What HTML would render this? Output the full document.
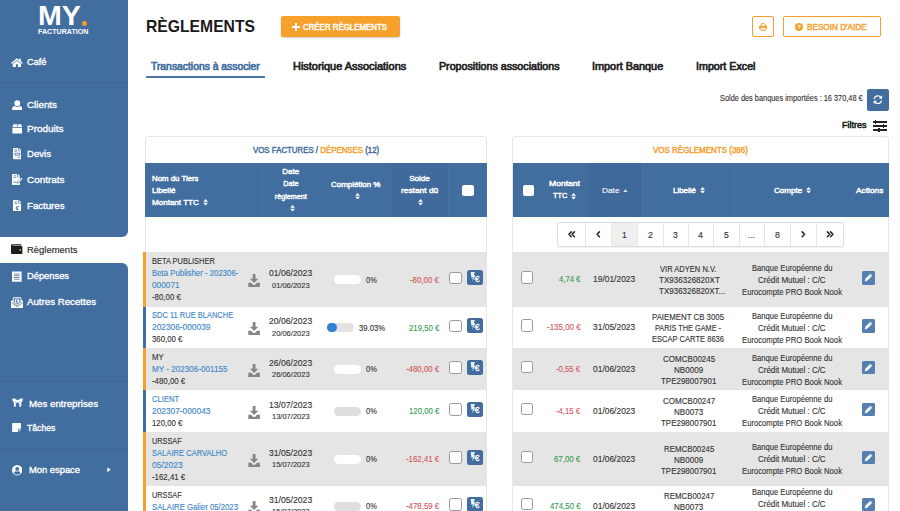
<!DOCTYPE html>
<html lang="fr">
<head>
<meta charset="utf-8">
<title>Règlements</title>
<style>
*{box-sizing:border-box;margin:0;padding:0}
html,body{width:900px;height:511px;overflow:hidden;background:#fff;font-family:"Liberation Sans",sans-serif;color:#333}
.a{position:absolute}
.t{position:absolute;white-space:nowrap;transform-origin:0 50%}
.b{font-weight:bold}
</style>
</head>
<body>
<div class="a" style="left:0px;top:0px;width:128px;height:237px;background:#416d9f;border-bottom-right-radius:6px"></div>
<div class="a" style="left:0px;top:263px;width:128px;height:248px;background:#416d9f;border-top-right-radius:6px"></div>
<div class="a" style="left:0px;top:81.5px;width:128px;height:1px;background:#3b6395;"></div>
<div class="a" style="left:0px;top:381px;width:128px;height:1px;background:#3b6395;"></div>
<div class="a" style="left:0px;top:449px;width:128px;height:1px;background:#3b6395;"></div>
<div class="a" style="left:81.5px;top:21px;width:5px;height:5px;background:#f5a02c;border-radius:50%"></div>
<div class="a" style="left:281px;top:16px;width:119px;height:21px;background:#f7a12d;border-radius:2px;box-shadow:0 1px 2px rgba(0,0,0,.2)"></div>
<div class="a" style="left:752px;top:16px;width:22px;height:21px;background:#fff;border:1px solid #f5a02c;border-radius:2px"></div>
<div class="a" style="left:783px;top:16px;width:98px;height:21px;background:#fff;border:1px solid #f5a02c;border-radius:2px"></div>
<div class="a" style="left:145.7px;top:76.2px;width:119.5px;height:1.6px;background:#4a73a6;"></div>
<div class="a" style="left:867px;top:88.5px;width:22px;height:22px;background:#416d9f;border-radius:2px"></div>
<div class="a" style="left:145.2px;top:136.3px;width:341.6px;height:380px;background:#fff;border:1px solid #e8e8e8;border-radius:3px"></div>
<div class="a" style="left:145.4px;top:163.2px;width:341.2px;height:53.6px;background:#416d9f;"></div>
<div class="a" style="left:462.3px;top:184.7px;width:11.6px;height:11.2px;background:#fff;border-radius:2px"></div>
<div class="a" style="left:390.3px;top:163.2px;width:58px;height:53.6px;background:rgba(0,0,0,.025);"></div>
<div class="a" style="left:261.5px;top:163.2px;width:1px;height:53.6px;background:rgba(255,255,255,.04);"></div>
<div class="a" style="left:322px;top:163.2px;width:1px;height:53.6px;background:rgba(255,255,255,.04);"></div>
<div class="a" style="left:390.3px;top:163.2px;width:1px;height:53.6px;background:rgba(255,255,255,.04);"></div>
<div class="a" style="left:448.3px;top:163.2px;width:1px;height:53.6px;background:rgba(255,255,255,.04);"></div>
<div class="a" style="left:146px;top:252px;width:340.5px;height:54.6px;background:#e5e5e5;"></div>
<div class="a" style="left:142.8px;top:252px;width:3.5px;height:54.6px;background:#f5a02c;"></div>
<div class="a" style="left:334px;top:274.8px;width:27.2px;height:9.6px;background:#fff;border-radius:5px"></div>
<div class="a" style="left:449.2px;top:271.5px;width:12.4px;height:12.6px;background:#fff;border:1px solid #9a9a9a;border-radius:2.5px"></div>
<div class="a" style="left:467.4px;top:270.2px;width:15.5px;height:15px;background:#416d9f;border-radius:2.5px"></div>
<div class="a" style="left:142.8px;top:306.6px;width:3.5px;height:41.4px;background:#416d9f;"></div>
<div class="a" style="left:326.8px;top:322.8px;width:27.2px;height:9.6px;background:#e3e3e3;border-radius:5px"></div>
<div class="a" style="left:326.8px;top:322.8px;width:10.5px;height:9.6px;background:#2f80d0;border-radius:5px"></div>
<div class="a" style="left:449.2px;top:319.5px;width:12.4px;height:12.6px;background:#fff;border:1px solid #9a9a9a;border-radius:2.5px"></div>
<div class="a" style="left:467.4px;top:318.2px;width:15.5px;height:15px;background:#416d9f;border-radius:2.5px"></div>
<div class="a" style="left:146px;top:348px;width:340.5px;height:42px;background:#e5e5e5;"></div>
<div class="a" style="left:142.8px;top:348px;width:3.5px;height:42px;background:#f5a02c;"></div>
<div class="a" style="left:334px;top:364.5px;width:27.2px;height:9.6px;background:#fff;border-radius:5px"></div>
<div class="a" style="left:449.2px;top:361.2px;width:12.4px;height:12.6px;background:#fff;border:1px solid #9a9a9a;border-radius:2.5px"></div>
<div class="a" style="left:467.4px;top:359.9px;width:15.5px;height:15px;background:#416d9f;border-radius:2.5px"></div>
<div class="a" style="left:142.8px;top:390px;width:3.5px;height:42px;background:#416d9f;"></div>
<div class="a" style="left:334px;top:406.5px;width:27.2px;height:9.6px;background:#dedede;border-radius:5px"></div>
<div class="a" style="left:449.2px;top:403.2px;width:12.4px;height:12.6px;background:#fff;border:1px solid #9a9a9a;border-radius:2.5px"></div>
<div class="a" style="left:467.4px;top:401.9px;width:15.5px;height:15px;background:#416d9f;border-radius:2.5px"></div>
<div class="a" style="left:146px;top:432px;width:340.5px;height:54px;background:#e5e5e5;"></div>
<div class="a" style="left:142.8px;top:432px;width:3.5px;height:54px;background:#f5a02c;"></div>
<div class="a" style="left:334px;top:454.5px;width:27.2px;height:9.6px;background:#fff;border-radius:5px"></div>
<div class="a" style="left:449.2px;top:451.2px;width:12.4px;height:12.6px;background:#fff;border:1px solid #9a9a9a;border-radius:2.5px"></div>
<div class="a" style="left:467.4px;top:449.9px;width:15.5px;height:15px;background:#416d9f;border-radius:2.5px"></div>
<div class="a" style="left:142.8px;top:486px;width:3.5px;height:40px;background:#f5a02c;"></div>
<div class="a" style="left:334px;top:501.5px;width:27.2px;height:9.6px;background:#dedede;border-radius:5px"></div>
<div class="a" style="left:449.2px;top:498.2px;width:12.4px;height:12.6px;background:#fff;border:1px solid #9a9a9a;border-radius:2.5px"></div>
<div class="a" style="left:467.4px;top:496.9px;width:15.5px;height:15px;background:#416d9f;border-radius:2.5px"></div>
<div class="a" style="left:512.4px;top:136.3px;width:376.6px;height:380px;background:#fff;border:1px solid #e8e8e8;border-radius:3px"></div>
<div class="a" style="left:512.6px;top:163.2px;width:376.2px;height:53.6px;background:#416d9f;"></div>
<div class="a" style="left:586.5px;top:163.2px;width:55.7px;height:53.6px;background:rgba(0,0,0,.03);"></div>
<div class="a" style="left:522.6px;top:184.5px;width:11.6px;height:11.4px;background:#fff;border-radius:2px"></div>
<div class="a" style="left:586.5px;top:163.2px;width:1px;height:53.6px;background:rgba(255,255,255,.04);"></div>
<div class="a" style="left:642.2px;top:163.2px;width:1px;height:53.6px;background:rgba(255,255,255,.04);"></div>
<div class="a" style="left:733.8px;top:163.2px;width:1px;height:53.6px;background:rgba(255,255,255,.04);"></div>
<div class="a" style="left:557.3px;top:222.3px;width:286.7px;height:25px;background:#fff;border:1px solid #dcdcdc;border-radius:2.5px;box-shadow:0 1px 1px rgba(0,0,0,.06)"></div>
<div class="a" style="left:610.5px;top:223.3px;width:26.5px;height:23px;background:#efefef;"></div>
<div class="a" style="left:585.4px;top:223.3px;width:1px;height:23px;background:#e6e6e6;"></div>
<div class="a" style="left:610.5px;top:223.3px;width:1px;height:23px;background:#e6e6e6;"></div>
<div class="a" style="left:637px;top:223.3px;width:1px;height:23px;background:#e6e6e6;"></div>
<div class="a" style="left:662.5px;top:223.3px;width:1px;height:23px;background:#e6e6e6;"></div>
<div class="a" style="left:687.8px;top:223.3px;width:1px;height:23px;background:#e6e6e6;"></div>
<div class="a" style="left:713.3px;top:223.3px;width:1px;height:23px;background:#e6e6e6;"></div>
<div class="a" style="left:739px;top:223.3px;width:1px;height:23px;background:#e6e6e6;"></div>
<div class="a" style="left:764.4px;top:223.3px;width:1px;height:23px;background:#e6e6e6;"></div>
<div class="a" style="left:790.4px;top:223.3px;width:1px;height:23px;background:#e6e6e6;"></div>
<div class="a" style="left:815.7px;top:223.3px;width:1px;height:23px;background:#e6e6e6;"></div>
<div class="a" style="left:513px;top:252px;width:375.5px;height:54.6px;background:#e5e5e5;"></div>
<div class="a" style="left:521px;top:271.0px;width:12.3px;height:12.5px;background:#fff;border:1px solid #9a9a9a;border-radius:2.5px"></div>
<div class="a" style="left:861.8px;top:271.0px;width:13.7px;height:13.5px;background:#547fb0;border-radius:1.5px"></div>
<div class="a" style="left:521px;top:319.0px;width:12.3px;height:12.5px;background:#fff;border:1px solid #9a9a9a;border-radius:2.5px"></div>
<div class="a" style="left:861.8px;top:319.0px;width:13.7px;height:13.5px;background:#547fb0;border-radius:1.5px"></div>
<div class="a" style="left:513px;top:348px;width:375.5px;height:42px;background:#e5e5e5;"></div>
<div class="a" style="left:521px;top:360.7px;width:12.3px;height:12.5px;background:#fff;border:1px solid #9a9a9a;border-radius:2.5px"></div>
<div class="a" style="left:861.8px;top:360.7px;width:13.7px;height:13.5px;background:#547fb0;border-radius:1.5px"></div>
<div class="a" style="left:521px;top:402.7px;width:12.3px;height:12.5px;background:#fff;border:1px solid #9a9a9a;border-radius:2.5px"></div>
<div class="a" style="left:861.8px;top:402.7px;width:13.7px;height:13.5px;background:#547fb0;border-radius:1.5px"></div>
<div class="a" style="left:513px;top:432px;width:375.5px;height:54px;background:#e5e5e5;"></div>
<div class="a" style="left:521px;top:450.7px;width:12.3px;height:12.5px;background:#fff;border:1px solid #9a9a9a;border-radius:2.5px"></div>
<div class="a" style="left:861.8px;top:450.7px;width:13.7px;height:13.5px;background:#547fb0;border-radius:1.5px"></div>
<div class="a" style="left:521px;top:497.7px;width:12.3px;height:12.5px;background:#fff;border:1px solid #9a9a9a;border-radius:2.5px"></div>
<div class="a" style="left:861.8px;top:497.7px;width:13.7px;height:13.5px;background:#547fb0;border-radius:1.5px"></div>
<div class="a" style="left:295px;top:23.2px;width:1.7px;height:7.6px;background:#fff;border-radius:.5px"></div>
<div class="a" style="left:292px;top:26.1px;width:7.6px;height:1.7px;background:#fff;border-radius:.5px"></div>
<div class="a" style="left:872.5px;top:121.35px;width:14.5px;height:1.3px;background:#222;"></div>
<div class="a" style="left:874.5px;top:120.4px;width:1.6px;height:3.2px;background:#222;"></div>
<div class="a" style="left:872.5px;top:125.35px;width:14.5px;height:1.3px;background:#222;"></div>
<div class="a" style="left:882.6999999999999px;top:124.4px;width:1.6px;height:3.2px;background:#222;"></div>
<div class="a" style="left:872.5px;top:129.35px;width:14.5px;height:1.3px;background:#222;"></div>
<div class="a" style="left:878.0999999999999px;top:128.4px;width:1.6px;height:3.2px;background:#222;"></div>
<div class="t" id="t0" style="left:37.8px;top:1.7px;font-size:27px;line-height:28px;color:#fff;letter-spacing:0px;transform:scaleX(1.0568);font-weight:bold;">MY</div>
<div class="t" id="t1" style="left:38.3px;top:27.4px;font-size:6.6px;line-height:9px;color:#fff;letter-spacing:0px;transform:scaleX(1.0799);font-weight:bold;">FACTURATION</div>
<div class="t" id="t2" style="left:27px;top:55.3px;font-size:9.8px;line-height:13px;color:#fff;letter-spacing:0px;transform:scaleX(0.9419);-webkit-text-stroke:0.34px #fff;">Café</div>
<div class="t" id="t3" style="left:26.5px;top:97.8px;font-size:9.8px;line-height:13px;color:#fff;letter-spacing:0px;transform:scaleX(1.0016);-webkit-text-stroke:0.34px #fff;">Clients</div>
<div class="t" id="t4" style="left:26.5px;top:122.3px;font-size:9.8px;line-height:13px;color:#fff;letter-spacing:0px;transform:scaleX(1.0152);-webkit-text-stroke:0.34px #fff;">Produits</div>
<div class="t" id="t5" style="left:26.5px;top:147.3px;font-size:9.8px;line-height:13px;color:#fff;letter-spacing:0px;transform:scaleX(0.9796);-webkit-text-stroke:0.34px #fff;">Devis</div>
<div class="t" id="t6" style="left:26.5px;top:173.3px;font-size:9.8px;line-height:13px;color:#fff;letter-spacing:0px;transform:scaleX(1.0127);-webkit-text-stroke:0.34px #fff;">Contrats</div>
<div class="t" id="t7" style="left:26.5px;top:199.3px;font-size:9.8px;line-height:13px;color:#fff;letter-spacing:0px;transform:scaleX(0.9836);-webkit-text-stroke:0.34px #fff;">Factures</div>
<div class="t" id="t8" style="left:26.5px;top:243.3px;font-size:9.8px;line-height:13px;color:#2a2a2a;letter-spacing:0px;transform:scaleX(0.9659);-webkit-text-stroke:0.15px #2a2a2a;">Règlements</div>
<div class="t" id="t9" style="left:26.5px;top:269.3px;font-size:9.8px;line-height:13px;color:#fff;letter-spacing:0px;transform:scaleX(0.9518);-webkit-text-stroke:0.34px #fff;">Dépenses</div>
<div class="t" id="t10" style="left:26.5px;top:295.3px;font-size:9.8px;line-height:13px;color:#fff;letter-spacing:0px;transform:scaleX(0.9899);-webkit-text-stroke:0.34px #fff;">Autres Recettes</div>
<div class="t" id="t11" style="left:28.5px;top:396.8px;font-size:9.8px;line-height:13px;color:#fff;letter-spacing:0px;transform:scaleX(0.9899);-webkit-text-stroke:0.34px #fff;">Mes entreprises</div>
<div class="t" id="t12" style="left:27px;top:421.3px;font-size:9.8px;line-height:13px;color:#fff;letter-spacing:0px;transform:scaleX(0.8805);-webkit-text-stroke:0.34px #fff;">Tâches</div>
<div class="t" id="t13" style="left:28.5px;top:463.3px;font-size:9.8px;line-height:13px;color:#fff;letter-spacing:0px;transform:scaleX(0.9555);-webkit-text-stroke:0.34px #fff;">Mon espace</div>
<div class="t" id="t14" style="left:146px;top:15.5px;font-size:17px;line-height:22px;color:#1a1a1a;letter-spacing:0px;transform:scaleX(0.9232);font-weight:bold;">RÈGLEMENTS</div>
<div class="t" id="t15" style="left:302.7px;top:21.6px;font-size:8.6px;line-height:10px;color:#fff;letter-spacing:0px;transform:scaleX(0.9162);-webkit-text-stroke:0.47px #fff;">CRÉER RÈGLEMENTS</div>
<div class="t" id="t16" style="left:807px;top:21.6px;font-size:8.6px;line-height:10px;color:#f5a02c;letter-spacing:0px;transform:scaleX(0.9509);-webkit-text-stroke:0.43px #f5a02c;">BESOIN D'AIDE</div>
<div class="t" id="t17" style="left:151px;top:59.9px;font-size:10.2px;line-height:14px;color:#416d9f;letter-spacing:0px;transform:scaleX(1.0149);-webkit-text-stroke:0.66px #416d9f;">Transactions à associer</div>
<div class="t" id="t18" style="left:292.5px;top:59.9px;font-size:10.2px;line-height:14px;color:#222;letter-spacing:0px;transform:scaleX(1.0747);-webkit-text-stroke:0.66px #222;">Historique Associations</div>
<div class="t" id="t19" style="left:438.5px;top:59.9px;font-size:10.2px;line-height:14px;color:#222;letter-spacing:0px;transform:scaleX(1.0483);-webkit-text-stroke:0.66px #222;">Propositions associations</div>
<div class="t" id="t20" style="left:591.5px;top:59.9px;font-size:10.2px;line-height:14px;color:#222;letter-spacing:0px;transform:scaleX(1.0654);-webkit-text-stroke:0.66px #222;">Import Banque</div>
<div class="t" id="t21" style="left:695.5px;top:59.9px;font-size:10.2px;line-height:14px;color:#222;letter-spacing:0px;transform:scaleX(1.0508);-webkit-text-stroke:0.66px #222;">Import Excel</div>
<div class="t" id="t22" style="left:720px;top:94.2px;font-size:8.2px;line-height:10px;color:#333;letter-spacing:0px;transform:scaleX(0.9008);-webkit-text-stroke:0.12px #333;">Solde des banques importées : 16 370,48 €</div>
<div class="t" id="t23" style="left:841.8px;top:120.1px;font-size:9px;line-height:11px;color:#222;letter-spacing:0px;transform:scaleX(0.9959);-webkit-text-stroke:0.54px #222;">Filtres</div>
<div class="t" id="t24" style="left:253px;top:145.4px;font-size:8.6px;line-height:10px;color:#416d9f;letter-spacing:0px;transform:scaleX(0.9143);-webkit-text-stroke:0.43px #416d9f;">VOS FACTURES / <span style="color:#f5a02c;-webkit-text-stroke-color:#f5a02c">DÉPENSES</span> (12)</div>
<div class="t" id="t25" style="left:152px;top:173.5px;font-size:8px;line-height:10px;color:#fff;letter-spacing:0px;transform:scaleX(0.9773);-webkit-text-stroke:0.44px #fff;">Nom du Tiers</div>
<div class="t" id="t26" style="left:152px;top:185.5px;font-size:8px;line-height:10px;color:#fff;letter-spacing:0px;transform:scaleX(1.0155);-webkit-text-stroke:0.44px #fff;">Libellé</div>
<div class="t" id="t27" style="left:152px;top:197.9px;font-size:8px;line-height:10px;color:#fff;letter-spacing:0px;transform:scaleX(1.0054);-webkit-text-stroke:0.44px #fff;">Montant TTC</div>
<div class="t" id="t28" style="left:282.35px;top:167.1px;font-size:8px;line-height:10px;color:#fff;letter-spacing:0px;transform:scaleX(1.0);-webkit-text-stroke:0.44px #fff;">Date</div>
<div class="t" id="t29" style="left:283.21px;top:179.1px;font-size:7.2px;line-height:10px;color:#fff;letter-spacing:0px;transform:scaleX(1.0);-webkit-text-stroke:0.4px #fff;">Date</div>
<div class="t" id="t30" style="left:274.82px;top:191.5px;font-size:7.2px;line-height:10px;color:#fff;letter-spacing:0px;transform:scaleX(1.0);-webkit-text-stroke:0.4px #fff;">règlement</div>
<div class="t" id="t31" style="left:331.2px;top:179.5px;font-size:8px;line-height:10px;color:#fff;letter-spacing:0px;transform:scaleX(0.9917);-webkit-text-stroke:0.44px #fff;">Complétion %</div>
<div class="t" id="t32" style="left:409.17px;top:173.5px;font-size:8px;line-height:10px;color:#fff;letter-spacing:0px;transform:scaleX(1.0);-webkit-text-stroke:0.44px #fff;">Solde</div>
<div class="t" id="t33" style="left:400.8px;top:185.5px;font-size:8px;line-height:10px;color:#fff;letter-spacing:0px;transform:scaleX(1.0456);-webkit-text-stroke:0.44px #fff;">restant dû</div>
<div class="t" id="t34" style="left:152.4px;top:255.7px;font-size:8.3px;line-height:11px;color:#333;letter-spacing:0px;transform:scaleX(0.8979);-webkit-text-stroke:0.12px #333;">BETA PUBLISHER</div>
<div class="t" id="t35" style="left:152.4px;top:267.9px;font-size:8.3px;line-height:11px;color:#3d85c6;letter-spacing:0px;transform:scaleX(0.9412);-webkit-text-stroke:0.12px #3d85c6;">Beta Publisher - 202306-</div>
<div class="t" id="t36" style="left:152.4px;top:280.1px;font-size:8.3px;line-height:11px;color:#3d85c6;letter-spacing:0px;transform:scaleX(0.9968);-webkit-text-stroke:0.12px #3d85c6;">000071</div>
<div class="t" id="t37" style="left:152.4px;top:292.3px;font-size:8.3px;line-height:11px;color:#333;letter-spacing:0px;transform:scaleX(0.9457);-webkit-text-stroke:0.12px #333;">-80,00 €</div>
<div class="t" id="t38" style="left:268.8px;top:268.0px;font-size:8.3px;line-height:11px;color:#333;letter-spacing:0px;transform:scaleX(1.0402);-webkit-text-stroke:0.12px #333;">01/06/2023</div>
<div class="t" id="t39" style="left:272px;top:280.6px;font-size:7px;line-height:10px;color:#333;letter-spacing:0px;transform:scaleX(1.0728);-webkit-text-stroke:0.1px #333;">01/06/2023</div>
<div class="t" id="t40" style="left:366px;top:274.7px;font-size:8.3px;line-height:11px;color:#333;letter-spacing:0px;transform:scaleX(0.9);-webkit-text-stroke:0.12px #333;">0%</div>
<div class="t" id="t41" style="left:410.4px;top:274.7px;font-size:8.3px;line-height:11px;color:#d2585a;letter-spacing:0px;transform:scaleX(0.9457);-webkit-text-stroke:0.12px #d2585a;">-80,00 €</div>
<div class="t" id="t42" style="left:152.4px;top:309.7px;font-size:8.3px;line-height:11px;color:#3d85c6;letter-spacing:0px;transform:scaleX(0.9046);-webkit-text-stroke:0.12px #3d85c6;">SDC 11 RUE BLANCHE</div>
<div class="t" id="t43" style="left:152.4px;top:321.9px;font-size:8.3px;line-height:11px;color:#3d85c6;letter-spacing:0px;transform:scaleX(1.0045);-webkit-text-stroke:0.12px #3d85c6;">202306-000039</div>
<div class="t" id="t44" style="left:152.4px;top:334.1px;font-size:8.3px;line-height:11px;color:#333;letter-spacing:0px;transform:scaleX(0.9413);-webkit-text-stroke:0.12px #333;">360,00 €</div>
<div class="t" id="t45" style="left:268.8px;top:316.0px;font-size:8.3px;line-height:11px;color:#333;letter-spacing:0px;transform:scaleX(1.0402);-webkit-text-stroke:0.12px #333;">20/06/2023</div>
<div class="t" id="t46" style="left:272px;top:328.6px;font-size:7px;line-height:10px;color:#333;letter-spacing:0px;transform:scaleX(1.0728);-webkit-text-stroke:0.1px #333;">20/06/2023</div>
<div class="t" id="t47" style="left:358.8px;top:322.7px;font-size:8.3px;line-height:11px;color:#333;letter-spacing:0px;transform:scaleX(0.9239);-webkit-text-stroke:0.12px #333;">39.03%</div>
<div class="t" id="t48" style="left:408.8px;top:322.7px;font-size:8.3px;line-height:11px;color:#3a9a52;letter-spacing:0px;transform:scaleX(0.9413);-webkit-text-stroke:0.12px #3a9a52;">219,50 €</div>
<div class="t" id="t49" style="left:152.4px;top:351.7px;font-size:8.3px;line-height:11px;color:#333;letter-spacing:0px;transform:scaleX(0.9315);-webkit-text-stroke:0.12px #333;">MY</div>
<div class="t" id="t50" style="left:152.4px;top:363.9px;font-size:8.3px;line-height:11px;color:#3d85c6;letter-spacing:0px;transform:scaleX(0.9794);-webkit-text-stroke:0.12px #3d85c6;">MY - 202306-001155</div>
<div class="t" id="t51" style="left:152.4px;top:376.1px;font-size:8.3px;line-height:11px;color:#333;letter-spacing:0px;transform:scaleX(0.9469);-webkit-text-stroke:0.12px #333;">-480,00 €</div>
<div class="t" id="t52" style="left:268.8px;top:357.7px;font-size:8.3px;line-height:11px;color:#333;letter-spacing:0px;transform:scaleX(1.0402);-webkit-text-stroke:0.12px #333;">26/06/2023</div>
<div class="t" id="t53" style="left:272px;top:370.3px;font-size:7px;line-height:10px;color:#333;letter-spacing:0px;transform:scaleX(1.0728);-webkit-text-stroke:0.1px #333;">26/06/2023</div>
<div class="t" id="t54" style="left:366px;top:364.4px;font-size:8.3px;line-height:11px;color:#333;letter-spacing:0px;transform:scaleX(0.9);-webkit-text-stroke:0.12px #333;">0%</div>
<div class="t" id="t55" style="left:406px;top:364.4px;font-size:8.3px;line-height:11px;color:#d2585a;letter-spacing:0px;transform:scaleX(0.9469);-webkit-text-stroke:0.12px #d2585a;">-480,00 €</div>
<div class="t" id="t56" style="left:152.4px;top:393.7px;font-size:8.3px;line-height:11px;color:#3d85c6;letter-spacing:0px;transform:scaleX(0.9215);-webkit-text-stroke:0.12px #3d85c6;">CLIENT</div>
<div class="t" id="t57" style="left:152.4px;top:405.9px;font-size:8.3px;line-height:11px;color:#3d85c6;letter-spacing:0px;transform:scaleX(1.0045);-webkit-text-stroke:0.12px #3d85c6;">202307-000043</div>
<div class="t" id="t58" style="left:152.4px;top:418.1px;font-size:8.3px;line-height:11px;color:#333;letter-spacing:0px;transform:scaleX(0.9413);-webkit-text-stroke:0.12px #333;">120,00 €</div>
<div class="t" id="t59" style="left:268.8px;top:399.7px;font-size:8.3px;line-height:11px;color:#333;letter-spacing:0px;transform:scaleX(1.0402);-webkit-text-stroke:0.12px #333;">13/07/2023</div>
<div class="t" id="t60" style="left:272px;top:412.3px;font-size:7px;line-height:10px;color:#333;letter-spacing:0px;transform:scaleX(1.0728);-webkit-text-stroke:0.1px #333;">13/07/2023</div>
<div class="t" id="t61" style="left:366px;top:406.4px;font-size:8.3px;line-height:11px;color:#333;letter-spacing:0px;transform:scaleX(0.9);-webkit-text-stroke:0.12px #333;">0%</div>
<div class="t" id="t62" style="left:408.8px;top:406.4px;font-size:8.3px;line-height:11px;color:#3a9a52;letter-spacing:0px;transform:scaleX(0.9413);-webkit-text-stroke:0.12px #3a9a52;">120,00 €</div>
<div class="t" id="t63" style="left:152.4px;top:435.7px;font-size:8.3px;line-height:11px;color:#333;letter-spacing:0px;transform:scaleX(0.8795);-webkit-text-stroke:0.12px #333;">URSSAF</div>
<div class="t" id="t64" style="left:152.4px;top:447.9px;font-size:8.3px;line-height:11px;color:#3d85c6;letter-spacing:0px;transform:scaleX(0.9145);-webkit-text-stroke:0.12px #3d85c6;">SALAIRE CARVALHO</div>
<div class="t" id="t65" style="left:152.4px;top:460.1px;font-size:8.3px;line-height:11px;color:#3d85c6;letter-spacing:0px;transform:scaleX(1.0267);-webkit-text-stroke:0.12px #3d85c6;">05/2023</div>
<div class="t" id="t66" style="left:152.4px;top:472.3px;font-size:8.3px;line-height:11px;color:#333;letter-spacing:0px;transform:scaleX(0.9469);-webkit-text-stroke:0.12px #333;">-162,41 €</div>
<div class="t" id="t67" style="left:268.8px;top:447.7px;font-size:8.3px;line-height:11px;color:#333;letter-spacing:0px;transform:scaleX(1.0402);-webkit-text-stroke:0.12px #333;">31/05/2023</div>
<div class="t" id="t68" style="left:272px;top:460.3px;font-size:7px;line-height:10px;color:#333;letter-spacing:0px;transform:scaleX(1.0728);-webkit-text-stroke:0.1px #333;">15/07/2023</div>
<div class="t" id="t69" style="left:366px;top:454.4px;font-size:8.3px;line-height:11px;color:#333;letter-spacing:0px;transform:scaleX(0.9);-webkit-text-stroke:0.12px #333;">0%</div>
<div class="t" id="t70" style="left:406px;top:454.4px;font-size:8.3px;line-height:11px;color:#d2585a;letter-spacing:0px;transform:scaleX(0.9469);-webkit-text-stroke:0.12px #d2585a;">-162,41 €</div>
<div class="t" id="t71" style="left:152.4px;top:489.7px;font-size:8.3px;line-height:11px;color:#333;letter-spacing:0px;transform:scaleX(0.8795);-webkit-text-stroke:0.12px #333;">URSSAF</div>
<div class="t" id="t72" style="left:152.4px;top:501.9px;font-size:8.3px;line-height:11px;color:#3d85c6;letter-spacing:0px;transform:scaleX(0.937);-webkit-text-stroke:0.12px #3d85c6;">SALAIRE Galier 05/2023</div>
<div class="t" id="t73" style="left:152.4px;top:514.1px;font-size:8.3px;line-height:11px;color:#333;letter-spacing:0px;transform:scaleX(0.9469);-webkit-text-stroke:0.12px #333;">-478,59 €</div>
<div class="t" id="t74" style="left:268.8px;top:494.7px;font-size:8.3px;line-height:11px;color:#333;letter-spacing:0px;transform:scaleX(1.0402);-webkit-text-stroke:0.12px #333;">31/05/2023</div>
<div class="t" id="t75" style="left:272px;top:507.3px;font-size:7px;line-height:10px;color:#333;letter-spacing:0px;transform:scaleX(1.0728);-webkit-text-stroke:0.1px #333;">15/07/2023</div>
<div class="t" id="t76" style="left:366px;top:501.4px;font-size:8.3px;line-height:11px;color:#333;letter-spacing:0px;transform:scaleX(0.9);-webkit-text-stroke:0.12px #333;">0%</div>
<div class="t" id="t77" style="left:406px;top:501.4px;font-size:8.3px;line-height:11px;color:#d2585a;letter-spacing:0px;transform:scaleX(0.9469);-webkit-text-stroke:0.12px #d2585a;">-478,59 €</div>
<div class="t" id="t78" style="left:653.3px;top:145.4px;font-size:8.6px;line-height:10px;color:#f5a02c;letter-spacing:0px;transform:scaleX(0.9285);-webkit-text-stroke:0.43px #f5a02c;">VOS RÈGLEMENTS (386)</div>
<div class="t" id="t79" style="left:549px;top:178.9px;font-size:8px;line-height:10px;color:#fff;letter-spacing:0px;transform:scaleX(1.0724);-webkit-text-stroke:0.44px #fff;">Montant</div>
<div class="t" id="t80" style="left:552.6px;top:191.3px;font-size:8px;line-height:10px;color:#fff;letter-spacing:0px;transform:scaleX(0.9253);-webkit-text-stroke:0.44px #fff;">TTC</div>
<div class="t" id="t81" style="left:601.5px;top:185.5px;font-size:8px;line-height:10px;color:#fff;letter-spacing:0px;transform:scaleX(1.0351);-webkit-text-stroke:0.12px #fff;">Date</div>
<div class="t" id="t82" style="left:672.6px;top:185.5px;font-size:8px;line-height:10px;color:#fff;letter-spacing:0px;transform:scaleX(0.9939);-webkit-text-stroke:0.44px #fff;">Libellé</div>
<div class="t" id="t83" style="left:773.5px;top:185.5px;font-size:8px;line-height:10px;color:#fff;letter-spacing:0px;transform:scaleX(1.0102);-webkit-text-stroke:0.44px #fff;">Compte</div>
<div class="t" id="t84" style="left:855.6px;top:185.5px;font-size:8px;line-height:10px;color:#fff;letter-spacing:0px;transform:scaleX(1.0444);-webkit-text-stroke:0.44px #fff;">Actions</div>
<div class="t" id="t85" style="left:621.65px;top:229.5px;font-size:8.8px;line-height:11px;color:#333;letter-spacing:0px;transform:scaleX(0.98);-webkit-text-stroke:0.13px #333;">1</div>
<div class="t" id="t86" style="left:647.65px;top:229.5px;font-size:8.8px;line-height:11px;color:#333;letter-spacing:0px;transform:scaleX(0.98);-webkit-text-stroke:0.13px #333;">2</div>
<div class="t" id="t87" style="left:673.05px;top:229.5px;font-size:8.8px;line-height:11px;color:#333;letter-spacing:0px;transform:scaleX(0.98);-webkit-text-stroke:0.13px #333;">3</div>
<div class="t" id="t88" style="left:698.45px;top:229.5px;font-size:8.8px;line-height:11px;color:#333;letter-spacing:0px;transform:scaleX(0.98);-webkit-text-stroke:0.13px #333;">4</div>
<div class="t" id="t89" style="left:724.05px;top:229.5px;font-size:8.8px;line-height:11px;color:#333;letter-spacing:0px;transform:scaleX(0.98);-webkit-text-stroke:0.13px #333;">5</div>
<div class="t" id="t90" style="left:748.4px;top:229.5px;font-size:8.8px;line-height:11px;color:#333;letter-spacing:0px;transform:scaleX(0.98);-webkit-text-stroke:0.13px #333;">...</div>
<div class="t" id="t91" style="left:775.3px;top:229.5px;font-size:8.8px;line-height:11px;color:#333;letter-spacing:0px;transform:scaleX(0.98);-webkit-text-stroke:0.13px #333;">8</div>
<div class="t" id="t92" style="left:559px;top:274.4px;font-size:8.3px;line-height:11px;color:#3a9a52;letter-spacing:0px;transform:scaleX(0.9273);-webkit-text-stroke:0.12px #3a9a52;">4,74 €</div>
<div class="t" id="t93" style="left:593.3px;top:274.4px;font-size:8.3px;line-height:11px;color:#333;letter-spacing:0px;transform:scaleX(1.0161);-webkit-text-stroke:0.12px #333;">19/01/2023</div>
<div class="t" id="t94" style="left:660px;top:264.2px;font-size:8.3px;line-height:11px;color:#333;letter-spacing:0px;transform:scaleX(0.9104);-webkit-text-stroke:0.12px #333;">VIR ADYEN N.V.</div>
<div class="t" id="t95" style="left:658.7px;top:275.3px;font-size:8.3px;line-height:11px;color:#333;letter-spacing:0px;transform:scaleX(0.9692);-webkit-text-stroke:0.12px #333;">TX936326820XT</div>
<div class="t" id="t96" style="left:658.7px;top:286.4px;font-size:8.3px;line-height:11px;color:#333;letter-spacing:0px;transform:scaleX(0.9646);-webkit-text-stroke:0.12px #333;">TX936326820XT...</div>
<div class="t" id="t97" style="left:752px;top:262.7px;font-size:8.3px;line-height:11px;color:#333;letter-spacing:0px;transform:scaleX(0.9172);-webkit-text-stroke:0.12px #333;">Banque Européenne du</div>
<div class="t" id="t98" style="left:758.2px;top:274.7px;font-size:8.3px;line-height:11px;color:#333;letter-spacing:0px;transform:scaleX(0.9582);-webkit-text-stroke:0.12px #333;">Crédit Mutuel : C/C</div>
<div class="t" id="t99" style="left:742.2px;top:286.7px;font-size:8.3px;line-height:11px;color:#333;letter-spacing:0px;transform:scaleX(0.9266);-webkit-text-stroke:0.12px #333;">Eurocompte PRO Book Nook</div>
<div class="t" id="t100" style="left:546.7px;top:322.4px;font-size:8.3px;line-height:11px;color:#d2585a;letter-spacing:0px;transform:scaleX(0.9611);-webkit-text-stroke:0.12px #d2585a;">-135,00 €</div>
<div class="t" id="t101" style="left:593.3px;top:322.4px;font-size:8.3px;line-height:11px;color:#333;letter-spacing:0px;transform:scaleX(1.0161);-webkit-text-stroke:0.12px #333;">31/05/2023</div>
<div class="t" id="t102" style="left:652.4px;top:311.8px;font-size:8.3px;line-height:11px;color:#333;letter-spacing:0px;transform:scaleX(0.9443);-webkit-text-stroke:0.12px #333;">PAIEMENT CB 3005</div>
<div class="t" id="t103" style="left:655px;top:322.9px;font-size:8.3px;line-height:11px;color:#333;letter-spacing:0px;transform:scaleX(0.8818);-webkit-text-stroke:0.12px #333;">PARIS THE GAME -</div>
<div class="t" id="t104" style="left:652.4px;top:334.0px;font-size:8.3px;line-height:11px;color:#333;letter-spacing:0px;transform:scaleX(0.9112);-webkit-text-stroke:0.12px #333;">ESCAP CARTE 8636</div>
<div class="t" id="t105" style="left:752px;top:310.7px;font-size:8.3px;line-height:11px;color:#333;letter-spacing:0px;transform:scaleX(0.9172);-webkit-text-stroke:0.12px #333;">Banque Européenne du</div>
<div class="t" id="t106" style="left:758.2px;top:322.7px;font-size:8.3px;line-height:11px;color:#333;letter-spacing:0px;transform:scaleX(0.9582);-webkit-text-stroke:0.12px #333;">Crédit Mutuel : C/C</div>
<div class="t" id="t107" style="left:742.2px;top:334.7px;font-size:8.3px;line-height:11px;color:#333;letter-spacing:0px;transform:scaleX(0.9266);-webkit-text-stroke:0.12px #333;">Eurocompte PRO Book Nook</div>
<div class="t" id="t108" style="left:556.4px;top:364.1px;font-size:8.3px;line-height:11px;color:#d2585a;letter-spacing:0px;transform:scaleX(0.9287);-webkit-text-stroke:0.12px #d2585a;">-0,55 €</div>
<div class="t" id="t109" style="left:593.3px;top:364.1px;font-size:8.3px;line-height:11px;color:#333;letter-spacing:0px;transform:scaleX(1.0161);-webkit-text-stroke:0.12px #333;">01/06/2023</div>
<div class="t" id="t110" style="left:662.7px;top:354.2px;font-size:8.3px;line-height:11px;color:#333;letter-spacing:0px;transform:scaleX(0.9691);-webkit-text-stroke:0.12px #333;">COMCB00245</div>
<div class="t" id="t111" style="left:673.8px;top:365.3px;font-size:8.3px;line-height:11px;color:#333;letter-spacing:0px;transform:scaleX(0.9738);-webkit-text-stroke:0.12px #333;">NB0009</div>
<div class="t" id="t112" style="left:661px;top:376.4px;font-size:8.3px;line-height:11px;color:#333;letter-spacing:0px;transform:scaleX(0.9606);-webkit-text-stroke:0.12px #333;">TPE298007901</div>
<div class="t" id="t113" style="left:752px;top:352.7px;font-size:8.3px;line-height:11px;color:#333;letter-spacing:0px;transform:scaleX(0.9172);-webkit-text-stroke:0.12px #333;">Banque Européenne du</div>
<div class="t" id="t114" style="left:758.2px;top:364.7px;font-size:8.3px;line-height:11px;color:#333;letter-spacing:0px;transform:scaleX(0.9582);-webkit-text-stroke:0.12px #333;">Crédit Mutuel : C/C</div>
<div class="t" id="t115" style="left:742.2px;top:376.7px;font-size:8.3px;line-height:11px;color:#333;letter-spacing:0px;transform:scaleX(0.9266);-webkit-text-stroke:0.12px #333;">Eurocompte PRO Book Nook</div>
<div class="t" id="t116" style="left:556.4px;top:406.1px;font-size:8.3px;line-height:11px;color:#d2585a;letter-spacing:0px;transform:scaleX(0.9287);-webkit-text-stroke:0.12px #d2585a;">-4,15 €</div>
<div class="t" id="t117" style="left:593.3px;top:406.1px;font-size:8.3px;line-height:11px;color:#333;letter-spacing:0px;transform:scaleX(1.0161);-webkit-text-stroke:0.12px #333;">01/06/2023</div>
<div class="t" id="t118" style="left:662.7px;top:396.2px;font-size:8.3px;line-height:11px;color:#333;letter-spacing:0px;transform:scaleX(0.9691);-webkit-text-stroke:0.12px #333;">COMCB00247</div>
<div class="t" id="t119" style="left:673.8px;top:407.3px;font-size:8.3px;line-height:11px;color:#333;letter-spacing:0px;transform:scaleX(0.9738);-webkit-text-stroke:0.12px #333;">NB0073</div>
<div class="t" id="t120" style="left:661px;top:418.4px;font-size:8.3px;line-height:11px;color:#333;letter-spacing:0px;transform:scaleX(0.9606);-webkit-text-stroke:0.12px #333;">TPE298007901</div>
<div class="t" id="t121" style="left:752px;top:393.9px;font-size:8.3px;line-height:11px;color:#333;letter-spacing:0px;transform:scaleX(0.9172);-webkit-text-stroke:0.12px #333;">Banque Européenne du</div>
<div class="t" id="t122" style="left:758.2px;top:405.9px;font-size:8.3px;line-height:11px;color:#333;letter-spacing:0px;transform:scaleX(0.9582);-webkit-text-stroke:0.12px #333;">Crédit Mutuel : C/C</div>
<div class="t" id="t123" style="left:742.2px;top:417.9px;font-size:8.3px;line-height:11px;color:#333;letter-spacing:0px;transform:scaleX(0.9266);-webkit-text-stroke:0.12px #333;">Eurocompte PRO Book Nook</div>
<div class="t" id="t124" style="left:554.2px;top:454.1px;font-size:8.3px;line-height:11px;color:#3a9a52;letter-spacing:0px;transform:scaleX(0.9463);-webkit-text-stroke:0.12px #3a9a52;">67,00 €</div>
<div class="t" id="t125" style="left:593.3px;top:454.1px;font-size:8.3px;line-height:11px;color:#333;letter-spacing:0px;transform:scaleX(1.0161);-webkit-text-stroke:0.12px #333;">01/06/2023</div>
<div class="t" id="t126" style="left:663.5px;top:443.5px;font-size:8.3px;line-height:11px;color:#333;letter-spacing:0px;transform:scaleX(0.9482);-webkit-text-stroke:0.12px #333;">REMCB00245</div>
<div class="t" id="t127" style="left:673.8px;top:454.6px;font-size:8.3px;line-height:11px;color:#333;letter-spacing:0px;transform:scaleX(0.9738);-webkit-text-stroke:0.12px #333;">NB0009</div>
<div class="t" id="t128" style="left:661px;top:465.7px;font-size:8.3px;line-height:11px;color:#333;letter-spacing:0px;transform:scaleX(0.9606);-webkit-text-stroke:0.12px #333;">TPE298007901</div>
<div class="t" id="t129" style="left:752px;top:441.8px;font-size:8.3px;line-height:11px;color:#333;letter-spacing:0px;transform:scaleX(0.9172);-webkit-text-stroke:0.12px #333;">Banque Européenne du</div>
<div class="t" id="t130" style="left:758.2px;top:453.8px;font-size:8.3px;line-height:11px;color:#333;letter-spacing:0px;transform:scaleX(0.9582);-webkit-text-stroke:0.12px #333;">Crédit Mutuel : C/C</div>
<div class="t" id="t131" style="left:742.2px;top:465.8px;font-size:8.3px;line-height:11px;color:#333;letter-spacing:0px;transform:scaleX(0.9266);-webkit-text-stroke:0.12px #333;">Eurocompte PRO Book Nook</div>
<div class="t" id="t132" style="left:549.8px;top:501.1px;font-size:8.3px;line-height:11px;color:#3a9a52;letter-spacing:0px;transform:scaleX(0.9475);-webkit-text-stroke:0.12px #3a9a52;">474,50 €</div>
<div class="t" id="t133" style="left:593.3px;top:501.1px;font-size:8.3px;line-height:11px;color:#333;letter-spacing:0px;transform:scaleX(1.0161);-webkit-text-stroke:0.12px #333;">01/06/2023</div>
<div class="t" id="t134" style="left:663.5px;top:490.7px;font-size:8.3px;line-height:11px;color:#333;letter-spacing:0px;transform:scaleX(0.9482);-webkit-text-stroke:0.12px #333;">REMCB00247</div>
<div class="t" id="t135" style="left:673.8px;top:501.8px;font-size:8.3px;line-height:11px;color:#333;letter-spacing:0px;transform:scaleX(0.9738);-webkit-text-stroke:0.12px #333;">NB0073</div>
<div class="t" id="t136" style="left:661px;top:512.9px;font-size:8.3px;line-height:11px;color:#333;letter-spacing:0px;transform:scaleX(0.9606);-webkit-text-stroke:0.12px #333;">TPE298007901</div>
<div class="t" id="t137" style="left:752px;top:487.0px;font-size:8.3px;line-height:11px;color:#333;letter-spacing:0px;transform:scaleX(0.9172);-webkit-text-stroke:0.12px #333;">Banque Européenne du</div>
<div class="t" id="t138" style="left:758.2px;top:499.0px;font-size:8.3px;line-height:11px;color:#333;letter-spacing:0px;transform:scaleX(0.9582);-webkit-text-stroke:0.12px #333;">Crédit Mutuel : C/C</div>
<div class="t" id="t139" style="left:742.2px;top:511.0px;font-size:8.3px;line-height:11px;color:#333;letter-spacing:0px;transform:scaleX(0.9266);-webkit-text-stroke:0.12px #333;">Eurocompte PRO Book Nook</div>
<div class="t" id="t140" style="left:474.83px;top:273.6px;font-size:8.5px;line-height:10px;color:#fff;letter-spacing:0px;transform:scaleX(1);-webkit-text-stroke:0.3px #fff;">€</div>
<div class="t" id="t141" style="left:474.83px;top:321.6px;font-size:8.5px;line-height:10px;color:#fff;letter-spacing:0px;transform:scaleX(1);-webkit-text-stroke:0.3px #fff;">€</div>
<div class="t" id="t142" style="left:474.83px;top:363.3px;font-size:8.5px;line-height:10px;color:#fff;letter-spacing:0px;transform:scaleX(1);-webkit-text-stroke:0.3px #fff;">€</div>
<div class="t" id="t143" style="left:474.83px;top:405.3px;font-size:8.5px;line-height:10px;color:#fff;letter-spacing:0px;transform:scaleX(1);-webkit-text-stroke:0.3px #fff;">€</div>
<div class="t" id="t144" style="left:474.83px;top:453.3px;font-size:8.5px;line-height:10px;color:#fff;letter-spacing:0px;transform:scaleX(1);-webkit-text-stroke:0.3px #fff;">€</div>
<div class="t" id="t145" style="left:474.83px;top:500.3px;font-size:8.5px;line-height:10px;color:#fff;letter-spacing:0px;transform:scaleX(1);-webkit-text-stroke:0.3px #fff;">€</div>
<svg class="a" style="left:11.2px;top:57.5px;" width="11.8" height="9" viewBox="0 0 24 18"><path fill="#fff" d="M12 0.2 L0.2 10 L1.9 12 L12 3.7 L22.1 12 L23.8 10 L19.8 6.7 V1.4 H16.4 V3.9 Z"/><path fill="#fff" d="M12 5.4 L3.6 12.3 V18 H9.9 V12.8 H14.1 V18 H20.4 V12.3 Z"/></svg>
<svg class="a" style="left:11.8px;top:99.6px;" width="10.6" height="10.5" viewBox="0 0 22 21"><circle cx="11" cy="6.2" r="6" fill="#fff"/><path fill="#fff" d="M5.4 11.8 C2.2 12.2 0.2 14.6 0.2 17.6 V19 A2 2 0 0 0 2.2 21 H19.8 A2 2 0 0 0 21.8 19 V17.6 C21.8 14.6 19.8 12.2 16.6 11.8 C15 13 13 13.6 11 13.6 C9 13.6 7 13 5.4 11.8 Z"/></svg>
<svg class="a" style="left:11.5px;top:124.1px;" width="10.6" height="9.8" viewBox="0 0 21 20"><path fill="#fff" d="M3.4 0.4 H9.8 V6.6 H0.5 L2.2 1.3 A1.3 1.3 0 0 1 3.4 0.4 Z M11.2 0.4 H17.6 A1.3 1.3 0 0 1 18.8 1.3 L20.5 6.6 H11.2 Z M0.4 8 H20.6 V18 A1.6 1.6 0 0 1 19 19.6 H2 A1.6 1.6 0 0 1 0.4 18 Z"/></svg>
<svg class="a" style="left:12.7px;top:148.4px;" width="8.7" height="11.2" viewBox="0 0 17 22"><path fill="#fff" d="M1.6 0 H10.4 V5.6 A1 1 0 0 0 11.4 6.6 H17 V20.4 A1.6 1.6 0 0 1 15.4 22 H1.6 A1.6 1.6 0 0 1 0 20.4 V1.6 A1.6 1.6 0 0 1 1.6 0 Z M11.8 0.2 L16.8 5.2 H11.8 Z"/><rect x="3" y="9.4" width="11" height="5.4" fill="#416d9f"/><rect x="4.6" y="10.9" width="7.8" height="2.4" fill="#fff"/><rect x="3" y="3" width="5" height="1.4" fill="#416d9f"/><rect x="3" y="5.6" width="5" height="1.4" fill="#416d9f"/><rect x="9.5" y="17.4" width="4.5" height="1.5" fill="#416d9f"/></svg>
<svg class="a" style="left:11.6px;top:173.6px;" width="8.7" height="11.2" viewBox="0 0 17 22"><path fill="#fff" d="M1.6 0 H10.4 V5.6 A1 1 0 0 0 11.4 6.6 H17 V20.4 A1.6 1.6 0 0 1 15.4 22 H1.6 A1.6 1.6 0 0 1 0 20.4 V1.6 A1.6 1.6 0 0 1 1.6 0 Z M11.8 0.2 L16.8 5.2 H11.8 Z"/><rect x="3" y="3" width="5" height="1.4" fill="#416d9f"/><rect x="3" y="5.8" width="5" height="1.4" fill="#416d9f"/><path d="M3 17.6 C4.6 13.6 5.4 13.6 6.2 17 C6.8 15.4 7.6 15.6 8.2 17 H10.5" stroke="#416d9f" stroke-width="1.3" fill="none"/></svg>
<svg class="a" style="left:17.2px;top:177.2px;" width="6" height="7.4" viewBox="0 0 12 15"><path fill="#fff" stroke="#416d9f" stroke-width="1.2" d="M9 1 L11.4 3.4 L4.2 11.6 L1 12.6 L1.6 9.2 Z"/></svg>
<svg class="a" style="left:12.7px;top:199.6px;" width="8.7" height="11.3" viewBox="0 0 17 22"><path fill="#fff" d="M1.6 0 H10.4 V5.6 A1 1 0 0 0 11.4 6.6 H17 V20.4 A1.6 1.6 0 0 1 15.4 22 H1.6 A1.6 1.6 0 0 1 0 20.4 V1.6 A1.6 1.6 0 0 1 1.6 0 Z M11.8 0.2 L16.8 5.2 H11.8 Z"/><rect x="3" y="3" width="5" height="1.4" fill="#416d9f"/><rect x="3" y="5.8" width="5" height="1.4" fill="#416d9f"/><text x="8.5" y="19.3" font-family="Liberation Sans,sans-serif" font-weight="bold" font-size="11.5" text-anchor="middle" fill="#416d9f">€</text></svg>
<svg class="a" style="left:11.2px;top:244.3px;" width="11.4" height="10.2" viewBox="0 0 23 20"><path fill="#1c1c1c" d="M2.8 0 H19.4 A1.6 1.6 0 0 1 21 1.6 V2.6 H3.2 A0.7 0.7 0 0 0 3.2 4 H20.8 A2.2 2.2 0 0 1 23 6.2 V17.8 A2.2 2.2 0 0 1 20.8 20 H2.8 A2.8 2.8 0 0 1 0 17.2 V2.8 A2.8 2.8 0 0 1 2.8 0 Z"/><circle cx="18.6" cy="12" r="1.5" fill="#fff"/></svg>
<svg class="a" style="left:12.2px;top:270.5px;" width="9.6" height="11.2" viewBox="0 0 19 22"><path fill="#fff" d="M0 0.3 L1.6 1.5 L3.2 0.3 L4.8 1.5 L6.4 0.3 L8 1.5 L9.5 0.3 L11 1.5 L12.6 0.3 L14.2 1.5 L15.8 0.3 L17.4 1.5 L19 0.3 V21.7 L17.4 20.5 L15.8 21.7 L14.2 20.5 L12.6 21.7 L11 20.5 L9.5 21.7 L8 20.5 L6.4 21.7 L4.8 20.5 L3.2 21.7 L1.6 20.5 L0 21.7 Z"/><rect x="4" y="5.2" width="11" height="1.5" fill="#416d9f"/><rect x="4" y="8.6" width="11" height="1.5" fill="#416d9f"/><rect x="4" y="12" width="11" height="1.5" fill="#416d9f"/><rect x="4" y="15.4" width="11" height="1.5" fill="#416d9f"/></svg>
<svg class="a" style="left:11px;top:296.6px;" width="12.2" height="11.2" viewBox="0 0 24 22"><path fill="#fff" d="M0 8.4 L3.6 5.4 V2 A1.4 1.4 0 0 1 5 0.6 H19 A1.4 1.4 0 0 1 20.4 2 V5.4 L24 8.4 V20 A2 2 0 0 1 22 22 H2 A2 2 0 0 1 0 20 Z"/><path fill="#416d9f" d="M5.2 2.4 H18.8 V10.6 L12 15.4 L5.2 10.6 Z"/><path fill="#416d9f" d="M1.2 10.2 L12 17.8 L22.8 10.2 V11.9 L12 19.5 L1.2 11.9 Z"/><circle cx="12" cy="8" r="5" fill="#fff"/><text x="12" y="11.2" font-family="Liberation Sans,sans-serif" font-weight="bold" font-size="9" text-anchor="middle" fill="#416d9f">€</text></svg>
<svg class="a" style="left:11.6px;top:397.6px;" width="11.2" height="9" viewBox="0 0 22 18"><path fill="#fff" d="M0.4 1 H6 L8 3.4 H14 L16 1 H21.6 L20.4 7 L18.4 8.4 V16 A1.4 1.4 0 0 1 17 17.4 H14.6 V12.6 A3.6 3.6 0 0 0 7.4 12.6 V17.4 H5 A1.4 1.4 0 0 1 3.6 16 V8.4 L1.6 7 Z"/><circle cx="7.6" cy="7.6" r="1.1" fill="#416d9f"/><circle cx="14.4" cy="7.6" r="1.1" fill="#416d9f"/></svg>
<svg class="a" style="left:12.3px;top:423.4px;" width="9.2" height="9" viewBox="0 0 18 18"><path fill="#fff" d="M1.4 0 H16.6 A1.4 1.4 0 0 1 18 1.4 V11.4 H13 A1.4 1.4 0 0 0 11.6 12.8 V18 H1.4 A1.4 1.4 0 0 1 0 16.6 V1.4 A1.4 1.4 0 0 1 1.4 0 Z M13.2 12.8 H17.8 L13.2 17.6 Z"/></svg>
<svg class="a" style="left:11.8px;top:465.2px;" width="10.4" height="10.4" viewBox="0 0 20 20"><circle cx="10" cy="10" r="10" fill="#fff"/><circle cx="10" cy="7.6" r="3.6" fill="#416d9f"/><path fill="#416d9f" d="M3.6 15.4 C4.6 13 6.6 12.2 7.6 12.2 C9.2 12.8 10.8 12.8 12.4 12.2 C13.4 12.2 15.4 13 16.4 15.4 C14.8 17.4 12.6 18.4 10 18.4 C7.4 18.4 5.2 17.4 3.6 15.4 Z"/></svg>
<svg class="a" style="left:107px;top:467px;" width="4" height="5.4" viewBox="0 0 8 11"><path fill="#fff" d="M0.6 0.4 L7.4 5.5 L0.6 10.6 Z"/></svg>
<svg class="a" style="left:758.6px;top:22.7px;" width="8.6" height="8" viewBox="0 0 17 16"><path fill="none" stroke="#f5a02c" stroke-width="1.8" d="M4.4 6 V1.2 H10.8 L12.6 3 V6"/><path fill="#f5a02c" d="M2 5.6 H15 A2 2 0 0 1 17 7.6 V12 H13.6 V9.6 H3.4 V12 H0 V7.6 A2 2 0 0 1 2 5.6 Z"/><path fill="none" stroke="#f5a02c" stroke-width="1.8" d="M4.4 10.4 V14.8 H12.6 V10.4"/></svg>
<svg class="a" style="left:794.7px;top:22.7px;" width="8" height="8" viewBox="0 0 16 16"><circle cx="8" cy="8" r="8" fill="#f5a02c"/><text x="8" y="12.4" font-family="Liberation Sans,sans-serif" font-weight="bold" font-size="12" text-anchor="middle" fill="#fff">?</text></svg>
<svg class="a" style="left:873.4px;top:94.8px;" width="9.8" height="9.4" viewBox="0 0 20 19"><path fill="none" stroke="#fff" stroke-width="2.6" d="M2.4 8.2 A7.6 7.6 0 0 1 16 4.6"/><path fill="#fff" d="M18.6 0.6 V7.6 H11.6 Z"/><path fill="none" stroke="#fff" stroke-width="2.6" d="M17.6 10.8 A7.6 7.6 0 0 1 4 14.4"/><path fill="#fff" d="M1.4 18.4 V11.4 H8.4 Z"/></svg>
<svg class="a" style="left:202.6px;top:199.1px;" width="5.2" height="6.6" viewBox="0 0 9 12"><path fill="#fff" fill-opacity="1" d="M4.5 0 L8.8 5.2 H0.2 Z M4.5 12 L8.8 6.8 H0.2 Z"/></svg>
<svg class="a" style="left:290.2px;top:205.0px;" width="5.2" height="6.6" viewBox="0 0 9 12"><path fill="#fff" fill-opacity="1" d="M4.5 0 L8.8 5.2 H0.2 Z M4.5 12 L8.8 6.8 H0.2 Z"/></svg>
<svg class="a" style="left:355.4px;top:192.9px;" width="5.2" height="6.6" viewBox="0 0 9 12"><path fill="#fff" fill-opacity="1" d="M4.5 0 L8.8 5.2 H0.2 Z M4.5 12 L8.8 6.8 H0.2 Z"/></svg>
<svg class="a" style="left:418.0px;top:199.3px;" width="5.2" height="6.6" viewBox="0 0 9 12"><path fill="#fff" fill-opacity="1" d="M4.5 0 L8.8 5.2 H0.2 Z M4.5 12 L8.8 6.8 H0.2 Z"/></svg>
<svg class="a" style="left:570.8px;top:193.1px;" width="5.2" height="6.6" viewBox="0 0 9 12"><path fill="#fff" fill-opacity="1" d="M4.5 0 L8.8 5.2 H0.2 Z M4.5 12 L8.8 6.8 H0.2 Z"/></svg>
<svg class="a" style="left:699.9px;top:186.9px;" width="5.2" height="6.6" viewBox="0 0 9 12"><path fill="#fff" fill-opacity="1" d="M4.5 0 L8.8 5.2 H0.2 Z M4.5 12 L8.8 6.8 H0.2 Z"/></svg>
<svg class="a" style="left:805.7px;top:186.9px;" width="5.2" height="6.6" viewBox="0 0 9 12"><path fill="#fff" fill-opacity="1" d="M4.5 0 L8.8 5.2 H0.2 Z M4.5 12 L8.8 6.8 H0.2 Z"/></svg>
<svg class="a" style="left:623.2px;top:188.8px;" width="4.8" height="3.2" viewBox="0 0 9 6"><path fill="#fff" fill-opacity=".85" d="M4.5 0.3 L8.7 5.8 H0.3 Z"/></svg>
<svg class="a" style="left:247.9px;top:274.4px;" width="12.2" height="13" viewBox="0 0 24 26"><path fill="#858585" d="M9.2 0 H14.8 V9.4 H20.4 L12 17.8 L3.6 9.4 H9.2 Z"/><path fill="#858585" d="M0.4 17.6 H6.2 L9.4 20.8 A3.6 3.6 0 0 0 14.6 20.8 L17.8 17.6 H23.6 V26 H0.4 Z"/></svg>
<svg class="a" style="left:247.9px;top:322.4px;" width="12.2" height="13" viewBox="0 0 24 26"><path fill="#858585" d="M9.2 0 H14.8 V9.4 H20.4 L12 17.8 L3.6 9.4 H9.2 Z"/><path fill="#858585" d="M0.4 17.6 H6.2 L9.4 20.8 A3.6 3.6 0 0 0 14.6 20.8 L17.8 17.6 H23.6 V26 H0.4 Z"/></svg>
<svg class="a" style="left:247.9px;top:364.1px;" width="12.2" height="13" viewBox="0 0 24 26"><path fill="#858585" d="M9.2 0 H14.8 V9.4 H20.4 L12 17.8 L3.6 9.4 H9.2 Z"/><path fill="#858585" d="M0.4 17.6 H6.2 L9.4 20.8 A3.6 3.6 0 0 0 14.6 20.8 L17.8 17.6 H23.6 V26 H0.4 Z"/></svg>
<svg class="a" style="left:247.9px;top:406.1px;" width="12.2" height="13" viewBox="0 0 24 26"><path fill="#858585" d="M9.2 0 H14.8 V9.4 H20.4 L12 17.8 L3.6 9.4 H9.2 Z"/><path fill="#858585" d="M0.4 17.6 H6.2 L9.4 20.8 A3.6 3.6 0 0 0 14.6 20.8 L17.8 17.6 H23.6 V26 H0.4 Z"/></svg>
<svg class="a" style="left:247.9px;top:454.1px;" width="12.2" height="13" viewBox="0 0 24 26"><path fill="#858585" d="M9.2 0 H14.8 V9.4 H20.4 L12 17.8 L3.6 9.4 H9.2 Z"/><path fill="#858585" d="M0.4 17.6 H6.2 L9.4 20.8 A3.6 3.6 0 0 0 14.6 20.8 L17.8 17.6 H23.6 V26 H0.4 Z"/></svg>
<svg class="a" style="left:247.9px;top:501.1px;" width="12.2" height="13" viewBox="0 0 24 26"><path fill="#858585" d="M9.2 0 H14.8 V9.4 H20.4 L12 17.8 L3.6 9.4 H9.2 Z"/><path fill="#858585" d="M0.4 17.6 H6.2 L9.4 20.8 A3.6 3.6 0 0 0 14.6 20.8 L17.8 17.6 H23.6 V26 H0.4 Z"/></svg>
<svg class="a" style="left:470.4px;top:272.1px;" width="5.6" height="9.6" viewBox="0 0 11 19"><path fill="#fff" fill-opacity=".9" d="M1.4 0.2 H9.6 L7.4 6.6 L10.6 6.2 L4.6 18.6 L5.6 10.6 L2.6 11.4 Z"/></svg>
<svg class="a" style="left:470.4px;top:320.1px;" width="5.6" height="9.6" viewBox="0 0 11 19"><path fill="#fff" fill-opacity=".9" d="M1.4 0.2 H9.6 L7.4 6.6 L10.6 6.2 L4.6 18.6 L5.6 10.6 L2.6 11.4 Z"/></svg>
<svg class="a" style="left:470.4px;top:361.8px;" width="5.6" height="9.6" viewBox="0 0 11 19"><path fill="#fff" fill-opacity=".9" d="M1.4 0.2 H9.6 L7.4 6.6 L10.6 6.2 L4.6 18.6 L5.6 10.6 L2.6 11.4 Z"/></svg>
<svg class="a" style="left:470.4px;top:403.8px;" width="5.6" height="9.6" viewBox="0 0 11 19"><path fill="#fff" fill-opacity=".9" d="M1.4 0.2 H9.6 L7.4 6.6 L10.6 6.2 L4.6 18.6 L5.6 10.6 L2.6 11.4 Z"/></svg>
<svg class="a" style="left:470.4px;top:451.8px;" width="5.6" height="9.6" viewBox="0 0 11 19"><path fill="#fff" fill-opacity=".9" d="M1.4 0.2 H9.6 L7.4 6.6 L10.6 6.2 L4.6 18.6 L5.6 10.6 L2.6 11.4 Z"/></svg>
<svg class="a" style="left:470.4px;top:498.8px;" width="5.6" height="9.6" viewBox="0 0 11 19"><path fill="#fff" fill-opacity=".9" d="M1.4 0.2 H9.6 L7.4 6.6 L10.6 6.2 L4.6 18.6 L5.6 10.6 L2.6 11.4 Z"/></svg>
<svg class="a" style="left:864.2px;top:273.1px;" width="9" height="9" viewBox="0 0 18 18"><path fill="#fff" d="M12.6 1.4 L16.6 5.4 L6.4 15.6 L1.6 16.8 L2.6 11.6 Z"/><path stroke="#547fb0" stroke-width="1" d="M11 3.4 L14.8 7.2"/></svg>
<svg class="a" style="left:864.2px;top:321.1px;" width="9" height="9" viewBox="0 0 18 18"><path fill="#fff" d="M12.6 1.4 L16.6 5.4 L6.4 15.6 L1.6 16.8 L2.6 11.6 Z"/><path stroke="#547fb0" stroke-width="1" d="M11 3.4 L14.8 7.2"/></svg>
<svg class="a" style="left:864.2px;top:362.8px;" width="9" height="9" viewBox="0 0 18 18"><path fill="#fff" d="M12.6 1.4 L16.6 5.4 L6.4 15.6 L1.6 16.8 L2.6 11.6 Z"/><path stroke="#547fb0" stroke-width="1" d="M11 3.4 L14.8 7.2"/></svg>
<svg class="a" style="left:864.2px;top:404.8px;" width="9" height="9" viewBox="0 0 18 18"><path fill="#fff" d="M12.6 1.4 L16.6 5.4 L6.4 15.6 L1.6 16.8 L2.6 11.6 Z"/><path stroke="#547fb0" stroke-width="1" d="M11 3.4 L14.8 7.2"/></svg>
<svg class="a" style="left:864.2px;top:452.8px;" width="9" height="9" viewBox="0 0 18 18"><path fill="#fff" d="M12.6 1.4 L16.6 5.4 L6.4 15.6 L1.6 16.8 L2.6 11.6 Z"/><path stroke="#547fb0" stroke-width="1" d="M11 3.4 L14.8 7.2"/></svg>
<svg class="a" style="left:864.2px;top:499.8px;" width="9" height="9" viewBox="0 0 18 18"><path fill="#fff" d="M12.6 1.4 L16.6 5.4 L6.4 15.6 L1.6 16.8 L2.6 11.6 Z"/><path stroke="#547fb0" stroke-width="1" d="M11 3.4 L14.8 7.2"/></svg>
<svg class="a" style="left:557px;top:222px;" width="288" height="25" viewBox="0 0 288 25"><path d="M14.25 9.90 L11.85 12.30 L14.25 14.70" fill="none" stroke="#222" stroke-width="1.5" stroke-linecap="round" stroke-linejoin="round"/><path d="M17.45 9.90 L15.05 12.30 L17.45 14.70" fill="none" stroke="#222" stroke-width="1.5" stroke-linecap="round" stroke-linejoin="round"/><path d="M42.45 9.90 L40.05 12.30 L42.45 14.70" fill="none" stroke="#222" stroke-width="1.5" stroke-linecap="round" stroke-linejoin="round"/><path d="M245.15 9.90 L247.55 12.30 L245.15 14.70" fill="none" stroke="#222" stroke-width="1.5" stroke-linecap="round" stroke-linejoin="round"/><path d="M270.35 9.90 L272.75 12.30 L270.35 14.70" fill="none" stroke="#222" stroke-width="1.5" stroke-linecap="round" stroke-linejoin="round"/><path d="M273.55 9.90 L275.95 12.30 L273.55 14.70" fill="none" stroke="#222" stroke-width="1.5" stroke-linecap="round" stroke-linejoin="round"/></svg>
</body>
</html>
